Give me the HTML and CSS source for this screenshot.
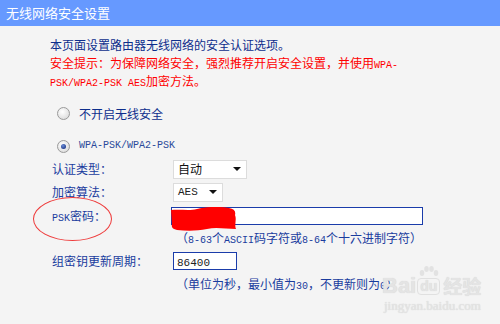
FILE: index.html
```html
<!DOCTYPE html>
<html>
	<head>
		<meta charset="utf-8">
		<title>无线网络安全设置</title>
		<link rel="stylesheet" href="styles.css">
	</head>
	<body>
		<div class="title">无线网络安全设置</div>
		<main>
			<div class="intro">
				<p>本页面设置路由器无线网络的安全认证选项。</p>
				<p class="warn">安全提示：为保障网络安全，强烈推荐开启安全设置，并使用<span class="mono">WPA-</span></p>
				<p class="warn"><span class="mono">PSK/WPA2-PSK AES</span>加密方法。</p>
			</div>

			<div class="radio-row first">
				<span class="radio"></span>
				<span>不开启无线安全</span>
			</div>
			<div class="radio-row second">
				<span class="radio checked"></span>
				<span class="mono">WPA-PSK/WPA2-PSK</span>
			</div>

			<div class="form">
				<div class="row r-auth">
					<label>认证类型：</label>
					<div class="select wide"><span>自动</span><i class="arrow"></i></div>
				</div>
				<div class="row r-enc">
					<label>加密算法：</label>
					<div class="select narrow"><span class="mono dark">AES</span><i class="arrow"></i></div>
				</div>
				<div class="row r-psk">
					<label class="psk"><span class="mono">PSK</span>密码：<span class="ring"></span></label>
					<div class="field-wrap">
						<div class="input long"></div>
						<svg class="scribble" width="70" height="26" viewBox="0 0 70 26">
							<path d="M0 3 C10 2 18 4 26 2 C34 0 46 -1 58 1 C63 2 65 4 64 8 C66 13 63 18 65 22 C55 22 45 20 36 22 C26 24 16 24 6 23 C2 22 0 21 1 17 Z" fill="#ff0000"/>
						</svg>
					</div>
				</div>
				<div class="hint">（<span class="mono">8-63</span>个<span class="mono">ASCII</span>码字符或<span class="mono">8-64</span>个十六进制字符）</div>
				<div class="row r-key">
					<label>组密钥更新周期：</label>
					<div class="input short"><span class="mono dark">86400</span></div>
				</div>
				<div class="hint">（单位为秒，最小值为<span class="mono">30</span>，不更新则为<span class="mono">0</span>）</div>
			</div>
		</main>

		<div class="watermark">
			<div class="brand">
				<span>Bai</span>
				<span class="paw-box">
					<svg class="paw" width="20" height="12" viewBox="0 0 20 12">
						<ellipse cx="3" cy="7" rx="2.3" ry="3" fill="#e2e2e2"/>
						<ellipse cx="7.5" cy="3" rx="2.3" ry="3" fill="#e2e2e2"/>
						<ellipse cx="12.5" cy="3" rx="2.3" ry="3" fill="#e2e2e2"/>
						<ellipse cx="17" cy="7" rx="2.3" ry="3" fill="#e2e2e2"/>
					</svg>
					<span class="du">du</span>
				</span>
				<span class="jy">经验</span>
			</div>
			<div class="site">jingyan.baidu.com</div>
		</div>
	</body>
</html>
```

FILE: styles.css
```css
html, body {
	margin: 0;
	padding: 0;
	background-color: #f4f4f4;
	font-family: "Noto Sans CJK SC", sans-serif;
	font-size: 12px;
	color: #0d2e8c;
}
body {
	position: relative;
	height: 324px;
	overflow: hidden;
}
p {
	margin: 0;
	height: 18px;
}
.title {
	height: 26px;
	line-height: 26px;
	padding-left: 6px;
	background-color: #6699ff;
	color: white;
	font-size: 13px;
}
main {
	padding-left: 50px;
}
.mono {
	font-family: "Liberation Mono", monospace;
	font-size: 10px;
	line-height: 1;
}
.dark {
	color: #222;
	font-size: 11px;
}
.intro {
	padding-top: 10px;
	line-height: 18px;
}
.warn {
	color: #ff0000;
}

.radio-row {
	display: flex;
	align-items: center;
	gap: 9px;
	height: 18px;
	padding-left: 7px;
}
.radio-row.first {
	margin-top: 14px;
}
.radio-row.second {
	margin-top: 15px;
	color: #2a4a9a;
}
.radio {
	width: 11px;
	height: 11px;
	border-radius: 50%;
	border: 1px solid #9a9a9a;
	background: radial-gradient(circle at 40% 35%, #ffffff, #d4d4d4);
	position: relative;
}
.radio.checked::after {
	content: "";
	position: absolute;
	left: 3px;
	top: 3px;
	width: 5px;
	height: 5px;
	border-radius: 50%;
	background: radial-gradient(circle at 40% 35%, #6a8cd8, #0a2270);
}

.form {
	display: flex;
	flex-direction: column;
}
.row {
	display: grid;
	grid-template-columns: 123px 300px;
	align-items: center;
	height: 20px;
	line-height: 18px;
}
.row label {
	padding-left: 2px;
	color: #1a3c9e;
}
.r-auth { margin-top: 4px; }
.r-enc { margin-top: 3px; }
.r-psk { margin-top: 4px; }
.r-key { margin-top: 4px; }

.select {
	display: flex;
	align-items: center;
	justify-content: space-between;
	height: 19px;
	padding: 0 5px 0 4px;
	background: white;
	border: 1px solid #dcdcdc;
	color: #111;
	box-sizing: border-box;
}
.select.wide {
	width: 74px;
}
.select.narrow {
	width: 50px;
}
.arrow {
	width: 0;
	height: 0;
	border-left: 4px solid transparent;
	border-right: 4px solid transparent;
	border-top: 4px solid #111;
}

.field-wrap {
	position: relative;
	margin-left: -2px;
	height: 18px;
}
.input {
	height: 18px;
	background: white;
	border: 1px solid #1a3caa;
	box-sizing: border-box;
	padding-left: 3px;
	line-height: 16px;
}
.input.long {
	width: 252px;
}
.input.short {
	width: 64px;
}
.scribble {
	position: absolute;
	left: 0;
	top: 0;
}
.psk {
	position: relative;
	color: #2a4a9a;
}
.ring {
	position: absolute;
	left: -17px;
	top: -10px;
	width: 77px;
	height: 42px;
	border: 1.5px solid #ee3b3b;
	border-radius: 50%;
}
.hint {
	height: 18px;
	line-height: 18px;
	margin-top: 3px;
	padding-left: 126px;
	color: #1a3c9e;
}
.r-key + .hint {
	margin-top: 4px;
}

.watermark {
	position: absolute;
	left: 382px;
	top: 268px;
	color: #e4e4e4;
	text-shadow: 0 0 1px #d0d0d0;
}
.brand {
	display: flex;
	align-items: flex-end;
	height: 30px;
	font-family: "Liberation Sans", sans-serif;
	font-weight: bold;
	font-size: 22px;
	line-height: 24px;
}
.paw-box {
	display: flex;
	flex-direction: column;
	align-items: center;
	margin-left: 1px;
}
.du {
	font-size: 14px;
	line-height: 15px;
	border: 1px solid #e0e0e0;
	border-radius: 4px;
	padding: 0 2px;
	margin-bottom: 3px;
}
.jy {
	font-family: "Noto Sans CJK SC", sans-serif;
	font-size: 19px;
	margin-left: 3px;
}
.site {
	font-family: "Liberation Serif", serif;
	font-size: 13px;
	line-height: 15px;
	padding-left: 2px;
}
```
